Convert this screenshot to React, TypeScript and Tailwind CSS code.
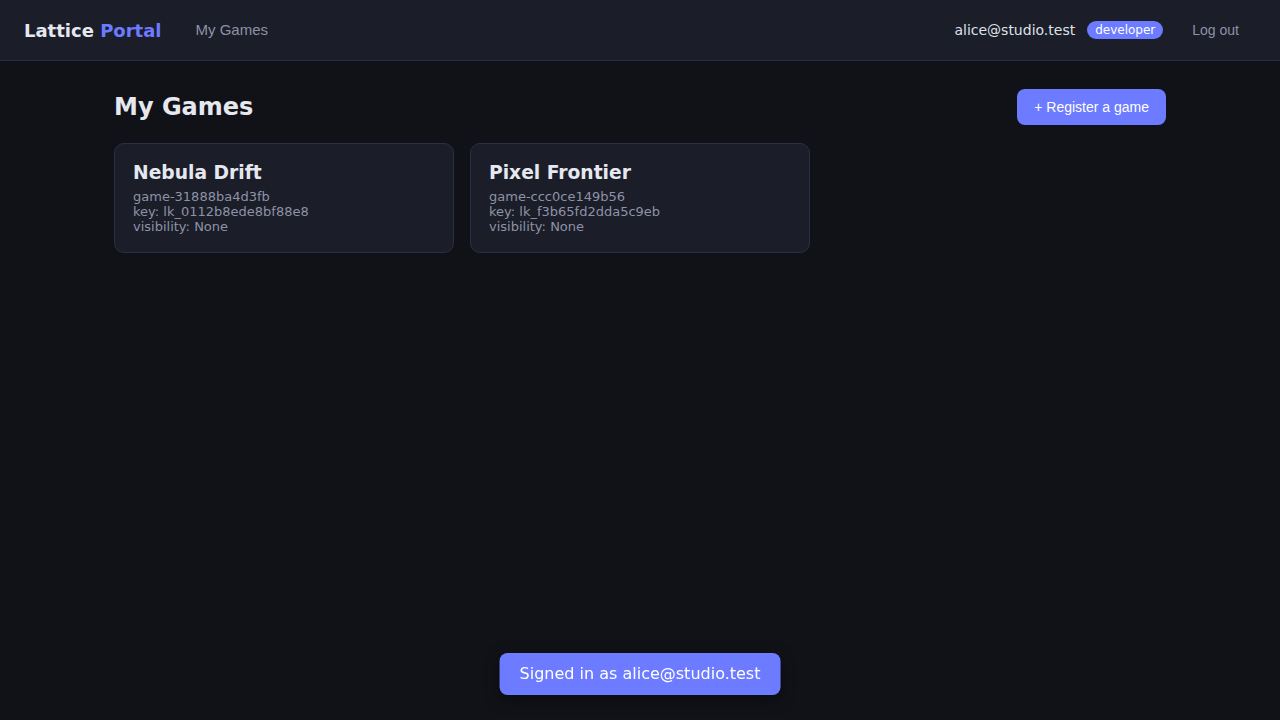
const games = [
  { name: "Nebula Drift", id: "game-31888ba4d3fb", key: "lk_0112b8ede8bf88e8", visibility: "None" },
  { name: "Pixel Frontier", id: "game-ccc0ce149b56", key: "lk_f3b65fd2dda5c9eb", visibility: "None" },
];

export default function App() {
  return (
    <div className="min-h-screen bg-[#111217] text-[#e6e8f0] font-['DejaVu_Sans',sans-serif]">
      <header className="h-[61px] bg-[#1b1d29] border-b border-[#2a2e45] flex items-center justify-between pl-6 pr-[25px]">
        <div className="flex items-center gap-[34px]">
          <div className="text-[18px] font-bold">
            Lattice <span className="text-[#6c7bff]">Portal</span>
          </div>
          <a className="text-[15px] text-[#8e92a6] font-['Liberation_Sans',sans-serif]">My Games</a>
        </div>
        <div className="flex items-center">
          <span className="text-[14px] text-[#dfe1ea]">alice@studio.test</span>
          <span className="ml-3 rounded-full bg-[#6c7bff] text-white text-[12px] px-2 h-[18px] leading-[18px]">developer</span>
          <button className="ml-[13px] px-4 text-[14px] text-[#8e92a6] font-['Liberation_Sans',sans-serif]">Log out</button>
        </div>
      </header>

      <main className="max-w-[1100px] mx-auto px-6 pt-7">
        <div className="flex items-center justify-between mb-[18px]">
          <h1 className="text-[24px] font-bold text-[#e6e8f0]">My Games</h1>
          <button className="h-9 px-[17px] rounded-lg bg-[#6c7bff] text-white text-[14px] font-['Liberation_Sans',sans-serif]">
            + Register a game
          </button>
        </div>
        <div className="grid grid-cols-3 gap-4">
          {games.map((g) => (
            <div key={g.id} className="h-[110px] rounded-[10px] border border-[#2c2f44] bg-[#1b1d29] px-[18px] pt-[15px]">
              <div className="text-[18.7px] font-bold text-[#e6e8f0] mb-[2px]">{g.name}</div>
              <div className="text-[13px] leading-[15px] text-[#8e92a6]">
                <div>{g.id}</div>
                <div>key: {g.key}</div>
                <div>visibility: {g.visibility}</div>
              </div>
            </div>
          ))}
        </div>
      </main>

      <div className="fixed bottom-[25px] left-1/2 -translate-x-1/2 h-[42px] px-5 flex items-center rounded-lg bg-[#6c7bff] text-white text-[16px] shadow-[0_4px_16px_rgba(0,0,0,0.4)]">
        Signed in as alice@studio.test
      </div>
    </div>
  );
}
